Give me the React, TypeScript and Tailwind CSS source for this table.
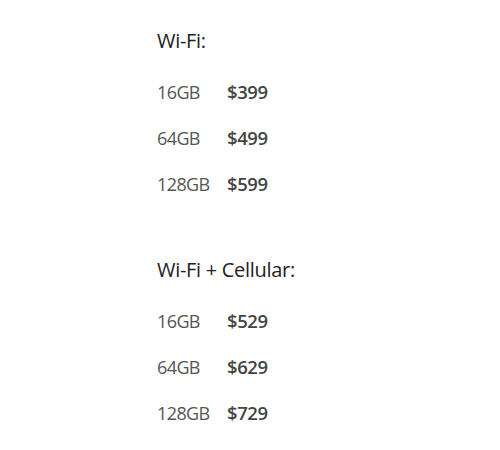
import React from "react";

const sections = [
  {
    title: "Wi-Fi:",
    rows: [
      { size: "16GB", price: "$399" },
      { size: "64GB", price: "$499" },
      { size: "128GB", price: "$599" },
    ],
  },
  {
    title: "Wi-Fi + Cellular:",
    rows: [
      { size: "16GB", price: "$529" },
      { size: "64GB", price: "$629" },
      { size: "128GB", price: "$729" },
    ],
  },
];

export default function App() {
  return (
    <div
      className="w-[500px] h-[450px] bg-white pl-[157px] pt-[29px] flex flex-col gap-[51px]"
      style={{ fontFamily: '"Open Sans", "Noto Sans", sans-serif' }}
    >
      {sections.map((s) => (
        <div key={s.title}>
          <h2 className="text-[20px] leading-[24px] font-normal text-[#222] mb-4 tracking-[-0.3px]">
            {s.title}
          </h2>
          {s.rows.map((r) => (
            <div key={r.size} className="h-[46px] flex items-center">
              <span className="w-[70px] text-[18px] text-[#555] tracking-[-0.6px]">{r.size}</span>
              <span className="text-[18.5px] font-semibold text-[#444] tracking-[-0.4px]">{r.price}</span>
            </div>
          ))}
        </div>
      ))}
    </div>
  );
}
